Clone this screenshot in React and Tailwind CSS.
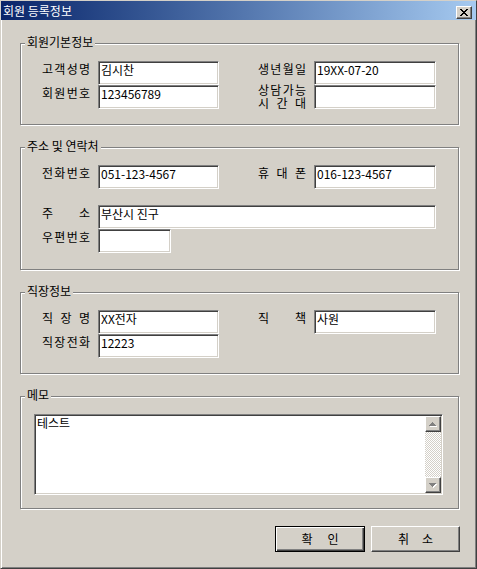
import React from 'react';

// classic win9x bevels
const sunken =
  'border border-t-[#808080] border-l-[#808080] border-r-white border-b-white shadow-[inset_1px_1px_0_#404040,inset_-1px_-1px_0_#d4d0c8]';
const raised =
  'border border-t-white border-l-white border-r-[#404040] border-b-[#404040] shadow-[inset_-1px_-1px_0_#808080]';

function Label({ text, className = '' }) {
  const chars = text.replace(/\s/g, '').split('');
  return (
    <div className={`w-[48px] shrink-0 flex justify-between ${className}`}>
      {chars.map((c, i) => (
        <span key={i}>{c}</span>
      ))}
    </div>
  );
}

function Input({ value, className = '' }) {
  return (
    <div className={`${sunken} bg-white h-[24px] pl-[2px] leading-[16px] whitespace-nowrap overflow-hidden ${className}`}>
      {value}
    </div>
  );
}

function Field({ label, value, width }) {
  return (
    <div className="flex items-start gap-[8px]">
      <Label text={label} className="leading-[16px]" />
      <Input value={value} className={width} />
    </div>
  );
}

function Group({ title, className = '', children }) {
  return (
    <div className={`relative w-[439px] border border-[#808080] shadow-[1px_1px_0_#fff,inset_1px_1px_0_#fff] ${className}`}>
      <div className="absolute -top-[10px] left-[4px] px-[2px] bg-[#d4d0c8] leading-[16px]">{title}</div>
      {children}
    </div>
  );
}

function CloseX() {
  return (
    <svg width="8" height="7" viewBox="0 0 8 7" shapeRendering="crispEdges">
      <path
        fill="#000"
        d="M0 0h2v1H0zM6 0h2v1H6zM1 1h2v1H1zM5 1h2v1H5zM2 2h4v1H2zM3 3h2v1H3zM2 4h4v1H2zM1 5h2v1H1zM5 5h2v1H5zM0 6h2v1H0zM6 6h2v1H6z"
      />
    </svg>
  );
}

function ScrollBtn({ up }) {
  return (
    <div className={`${raised} bg-[#d4d0c8] h-[16px] flex items-center justify-center`}>
      <svg width="8" height="5" viewBox="0 0 8 5" shapeRendering="crispEdges">
        {up ? (
          <>
            <path fill="#fff" d="M4 1h1v1h1v1h1v1h1v1H1V4h1V3h1V2h1z" />
            <path fill="#808080" d="M3 0h1v1h1v1h1v1h1v1H0V3h1V2h1V1h1z" />
          </>
        ) : (
          <>
            <path fill="#fff" d="M1 1h7v1H7v1H6v1H5v1H4V4H3V3H2V2H1z" />
            <path fill="#808080" d="M0 0h7v1H6v1H5v1H4v1H3V3H2V2H1V1H0z" />
          </>
        )}
      </svg>
    </div>
  );
}

export default function App() {
  return (
    <div className="w-[477px] h-[569px] bg-[#d4d0c8] border border-t-[#d4d0c8] border-l-[#d4d0c8] border-r-[#404040] border-b-[#404040] shadow-[inset_1px_1px_0_#fff,inset_-1px_-1px_0_#808080] flex flex-col text-[12px] text-black font-['Noto_Sans_CJK_KR','Noto_Sans',sans-serif]">
      {/* Title bar */}
      <div className="h-[19px] shrink-0 bg-linear-to-r from-[#0a246a] to-[#a6caf0] flex justify-between pl-[2px] pr-[4px]">
        <span className="text-white leading-[16px] self-center">회원 등록정보</span>
        <div className={`${raised} bg-[#d4d0c8] self-end mb-[1px] w-[16px] h-[13px] flex items-center justify-center`}>
          <CloseX />
        </div>
      </div>

      <div className="pl-[19px] pt-[23px] flex flex-col">
        {/* 회원기본정보 */}
        <Group title="회원기본정보" className="h-[82px] pt-[17px] pl-[21px]">
          <div className="flex">
            <div className="w-[216px] flex flex-col">
              <Field label="고객성명" value="김시찬" width="w-[121px]" />
              <Field label="회원번호" value="123456789" width="w-[121px]" />
            </div>
            <div className="flex flex-col">
              <Field label="생년월일" value="19XX-07-20" width="w-[122px]" />
              <div className="flex items-start gap-[8px]">
                <div className="w-[48px] -mt-[2px] leading-[13px]">
                  <Label text="상담가능" />
                  <Label text="시 간 대" />
                </div>
                <Input value="" className="w-[122px]" />
              </div>
            </div>
          </div>
        </Group>

        {/* 주소 및 연락처 */}
        <Group title="주소 및 연락처" className="mt-[22px] h-[123px] pt-[17px] pl-[21px]">
          <div className="flex">
            <div className="w-[216px]">
              <Field label="전화번호" value="051-123-4567" width="w-[121px]" />
            </div>
            <Field label="휴 대 폰" value="016-123-4567" width="w-[122px]" />
          </div>
          <div className="mt-[16px] flex flex-col">
            <Field label="주 소" value="부산시 진구" width="w-[338px]" />
            <Field label="우편번호" value="" width="w-[73px]" />
          </div>
        </Group>

        {/* 직장정보 */}
        <Group title="직장정보" className="mt-[22px] h-[82px] pt-[17px] pl-[21px]">
          <div className="flex">
            <div className="w-[216px] flex flex-col">
              <Field label="직 장 명" value="XX전자" width="w-[121px]" />
              <Field label="직장전화" value="12223" width="w-[121px]" />
            </div>
            <Field label="직 책" value="사원" width="w-[122px]" />
          </div>
        </Group>

        {/* 메모 */}
        <Group title="메모" className="mt-[22px] h-[113px] pt-[17px] pl-[13px]">
          <div className={`${sunken} bg-white w-[409px] h-[81px] p-[1px] flex`}>
            <div className="flex-1 pl-[1px] leading-[14px]">테스트</div>
            <div className="w-[16px] flex flex-col">
              <ScrollBtn up />
              <div className="flex-1 bg-[repeating-conic-gradient(#d4d0c8_0%_25%,#fff_0%_50%)] bg-[length:2px_2px]" />
              <ScrollBtn />
            </div>
          </div>
        </Group>

        {/* Buttons */}
        <div className="w-[440px] mt-[17px] flex justify-end gap-[6px]">
          <div className="w-[90px] h-[26px] border border-black shadow-[inset_1px_1px_0_#fff,inset_-1px_-1px_0_#404040,inset_-2px_-2px_0_#808080] flex items-center justify-center gap-[15px] leading-[16px]">
            <span>확</span>
            <span>인</span>
          </div>
          <div className={`${raised} w-[89px] h-[26px] flex items-center justify-center gap-[13px] leading-[16px]`}>
            <span>취</span>
            <span>소</span>
          </div>
        </div>
      </div>
    </div>
  );
}
